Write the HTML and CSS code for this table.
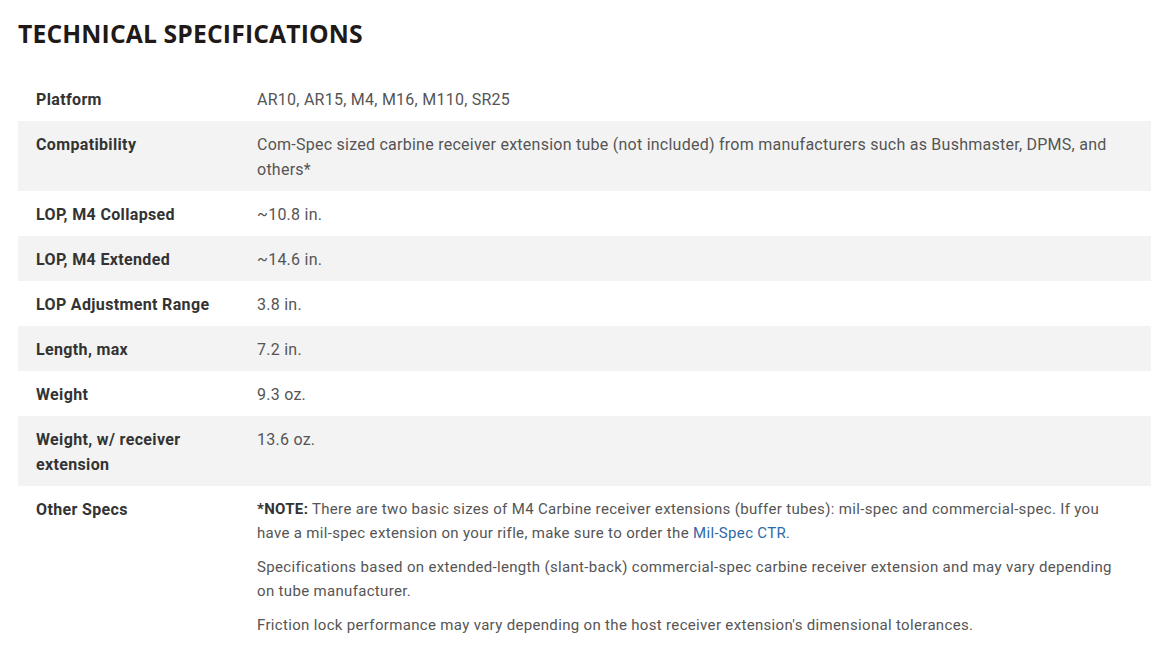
FILE: index.html
```html
<!DOCTYPE html>
<html lang="en">
<head>
<meta charset="utf-8">
<title>Technical Specifications</title>
<link rel="stylesheet" href="styles.css">
</head>
<body>
<section class="specs">
  <h2 class="specs-title">TECHNICAL SPECIFICATIONS</h2>
  <table class="spec-table">
    <colgroup><col class="col-label"><col class="col-value"></colgroup>
    <tbody>
      <tr><th>Platform</th><td>AR10, AR15, M4, M16, M110, SR25</td></tr>
      <tr class="alt"><th>Compatibility</th><td>Com-Spec sized carbine receiver extension tube (not included) from manufacturers such as Bushmaster, DPMS, and others*</td></tr>
      <tr><th>LOP, M4 Collapsed</th><td>~10.8 in.</td></tr>
      <tr class="alt"><th>LOP, M4 Extended</th><td>~14.6 in.</td></tr>
      <tr><th>LOP Adjustment Range</th><td>3.8 in.</td></tr>
      <tr class="alt"><th>Length, max</th><td>7.2 in.</td></tr>
      <tr><th>Weight</th><td>9.3 oz.</td></tr>
      <tr class="alt"><th>Weight, w/ receiver extension</th><td>13.6 oz.</td></tr>
      <tr><th>Other Specs</th><td class="notes">
        <p><strong>*NOTE:</strong> There are two basic sizes of M4 Carbine receiver extensions (buffer tubes): mil-spec and commercial-spec. If you have a mil-spec extension on your rifle, make sure to order the <a href="#">Mil-Spec CTR</a>.</p>
        <p>Specifications based on extended-length (slant-back) commercial-spec carbine receiver extension and may vary depending on tube manufacturer.</p>
        <p>Friction lock performance may vary depending on the host receiver extension's dimensional tolerances.</p>
      </td></tr>
    </tbody>
  </table>
</section>
</body>
</html>
```

FILE: styles.css
```css
html, body {
  margin: 0;
  padding: 0;
  background: #ffffff;
}

.specs {
  padding: 18px 17px 0 18px;
}

.specs-title {
  margin: 0 0 26px 0;
  font-family: "Open Sans", sans-serif;
  font-weight: 700;
  font-size: 24.7px;
  line-height: 32px;
  color: #1f1a17;
  letter-spacing: 0.15px;
}

.spec-table {
  width: 100%;
  table-layout: fixed;
  border-collapse: collapse;
  font-family: Roboto, "Liberation Sans", sans-serif;
  font-size: 16px;
  line-height: 25px;
}

.col-label {
  width: 221px;
}

.spec-table tr.alt {
  background: #f3f3f3;
}

.spec-table th {
  padding: 11px 18px 9px 18px;
  text-align: left;
  vertical-align: top;
  font-weight: 700;
  color: #333333;
  letter-spacing: 0.35px;
}

.spec-table td {
  padding: 11px 18px 9px 18px;
  vertical-align: top;
  color: #555555;
  letter-spacing: 0.25px;
}

.spec-table td.notes {
  font-size: 15px;
  letter-spacing: 0.33px;
}

.spec-table td p {
  margin: 0 0 10px 0;
  line-height: 24px;
}

.spec-table td p:last-child {
  margin-bottom: 4px;
}

.spec-table strong {
  color: #333333;
}

.spec-table a {
  color: #2f6aa6;
  text-decoration: none;
}
```
